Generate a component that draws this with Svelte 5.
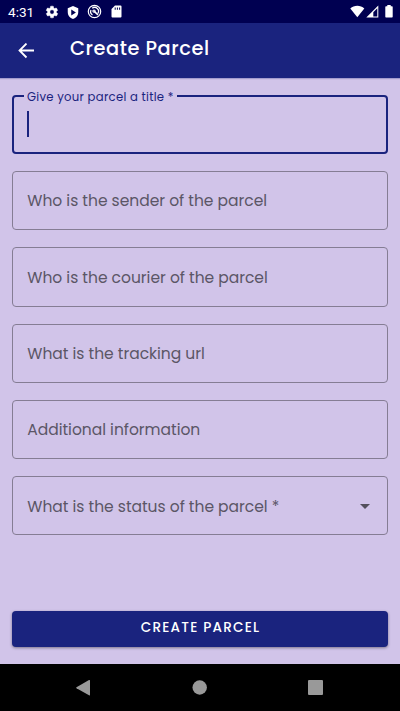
<script>
  const fields = [
    { label: 'Who is the sender of the parcel' },
    { label: 'Who is the courier of the parcel' },
    { label: 'What is the tracking url' },
    { label: 'Additional information' },
    { label: 'What is the status of the parcel *', select: true }
  ];
</script>

<div class="screen">
  <div class="status">
    <span class="time">4:31</span>
    <svg class="gear" width="14" height="14" viewBox="0 0 24 24"><path fill="#fff" stroke="#fff" stroke-width=".8" d="M19.4 13c0-.3.1-.6.1-1s0-.7-.1-1l2.1-1.6c.2-.2.2-.4.1-.6l-2-3.5c-.1-.2-.4-.3-.6-.2l-2.500 1c-.5-.4-1.100-.7-1.700-1l-.4-2.600c0-.3-.2-.5-.5-.5h-4c-.2 0-.4.2-.5.500l-.4 2.600c-.6.300-1.200.600-1.700 1l-2.500-1c-.2-.1-.5 0-.6.200l-2 3.500c-.1.200-.1.400.1.600L4.500 11c0 .300-.1.700-.1 1s0 .7.1 1l-2.100 1.600c-.2.200-.2.400-.1.600l2 3.500c.1.200.4.300.6.200l2.500-1c.5.400 1.100.7 1.700 1l.4 2.600c0 .3.2.5.5.5h4c.2 0 .4-.2.5-.5l.4-2.600c.6-.3 1.200-.6 1.700-1l2.500 1c.2.100.5 0 .6-.200l2-3.500c.1-.200.1-.400-.1-.600L19.400 13zM12 15.700A3.700 3.700 0 1 1 12 8.300a3.700 3.700 0 0 1 0 7.400z"/></svg>
    <svg class="shield" width="14" height="15" viewBox="0 0 24 24"><path fill="#fff" fill-rule="evenodd" d="M12 1 3 4.500V11c0 5.700 3.800 10.700 9 12 5.200-1.300 9-6.300 9-12V4.500zM9 7l8 5-8 5z"/></svg>
    <svg class="round" width="15" height="15" viewBox="0 0 15 15" fill="none" stroke="#fff"><circle cx="7.500" cy="7.500" r="6.200" stroke-width="1.200"/><path stroke-width="1.300" d="M5.500 10.900A3.900 3.900 0 0 1 4 6M5.200 4.200a3.900 3.900 0 0 1 5.600 5.300"/><path stroke-width="1.500" d="M7.300 7.400l3.700 3.500"/><circle cx="7" cy="7.100" r="1.100" stroke-width="1.200"/></svg>
    <svg class="card" width="11" height="13" viewBox="0 0 11 13"><path fill="#fff" fill-rule="evenodd" d="M4 .5h5.500q1 0 1 1v10q0 1-1 1h-8q-1 0-1-1V4zM3.700 2.500v2.300h1V2.500zm2.200 0v2.300h1V2.500zm2.200 0v2.300h1V2.500z"/></svg>
    <span class="grow"></span>
    <svg class="wifi" width="15" height="13" viewBox="0 0 15 13"><path fill="#fff" d="M7.300 12.200.300 3.500C4-.300 10.600-.300 14.300 3.500z"/></svg>
    <svg class="signal" width="13" height="13" viewBox="0 0 13 13"><path fill="#fff" fill-rule="evenodd" d="M.3 12.500 12.300.5v12zM7.300 7.200v4.300h4V3.200z"/></svg>
    <svg class="battery" width="8" height="13" viewBox="0 0 8 13"><path fill="#fff" d="M2.300 0h3.400v1.300H7q.7 0 .7.700v9.800q0 .7-.7.700H1q-.7 0-.7-.7V2q0-.7.700-.7h1.300z"/></svg>
  </div>

  <header>
    <svg width="17" height="16" viewBox="0 0 17 16" fill="none" stroke="#fff" stroke-width="1.800"><path d="M16 7.500H2M8.500.5l-7 7 7 7"/></svg>
    <h1>Create Parcel</h1>
  </header>

  <main>
    <fieldset class="active">
      <legend>Give your parcel a title *</legend>
      <div class="caret"></div>
    </fieldset>
    {#each fields as field}
      <div class="field">
        <span>{field.label}</span>
        {#if field.select}
          <svg width="10" height="5" viewBox="0 0 10 5"><path fill="#534f5c" d="M0 0h10L5 5z"/></svg>
        {/if}
      </div>
    {/each}
    <button>CREATE PARCEL</button>
  </main>

  <nav>
    <svg width="15" height="16" viewBox="0 0 15 16"><path fill="#999" d="M.5 7.300 13 .1q1-.4 1 .6v14.100q0 1-1 .5L.5 8.300q-.7-.5 0-1z"/></svg>
    <svg width="15" height="15" viewBox="0 0 15 15"><circle cx="7.700" cy="7.500" r="7.200" fill="#999"/></svg>
    <svg width="15" height="15" viewBox="0 0 15 15"><rect width="15" height="15" rx="1" fill="#999"/></svg>
  </nav>
</div>

<style>
  :global(body) { background: #d1c4e9; }
  .screen {
    width: 400px;
    height: 711px;
    display: flex;
    flex-direction: column;
    overflow: hidden;
    background: #d1c4e9;
    font-family: Poppins, Inter, sans-serif;
  }
  svg { display: block; flex: none; }
  .status {
    height: 23px;
    flex: none;
    box-sizing: border-box;
    display: flex;
    align-items: center;
    padding: 1px 7px 0 8px;
    background: #000051;
    color: #fff;
  }
  .time { width: 37px; font: 13.600px/16px Roboto, sans-serif; }
  .shield { margin-left: 7px; }
  .round { margin-left: 7px; }
  .card { margin-left: 9px; }
  .gear, .round, .card { margin-top: -1px; }
  .grow { flex: 1; }
  .signal, .wifi, .battery { margin-top: -1px; }
  .signal { margin-left: 1px; }
  .battery { margin-left: 6px; }
  header {
    height: 55px;
    flex: none;
    box-sizing: border-box;
    display: flex;
    align-items: center;
    padding-left: 18px;
    background: #1a237e;
    box-shadow: 0 1px 1px #1a237e40;
    color: #fff;
  }
  h1 {
    margin: -4px 0 0 35px;
    font-size: 19.400px;
    line-height: 28px;
    font-weight: 500;
    letter-spacing: 0.540px;
  }
  main {
    height: 586px;
    flex: none;
    box-sizing: border-box;
    display: flex;
    flex-direction: column;
    padding: 12px 12px 17px;
  }
  .active {
    height: 64px;
    flex: none;
    box-sizing: border-box;
    margin: 0;
    padding: 0 13px;
    border: 2px solid #1a237e;
    border-radius: 4px;
    color: #1a237e;
  }
  legend {
    height: 12px;
    margin-left: -3px;
    padding: 0 3px;
    font-size: 11.650px;
    line-height: 14px;
    letter-spacing: 0.290px;
  }
  .caret { width: 2px; height: 26px; margin-top: 9px; background: #1a237e; }
  .field {
    height: 59.300px;
    flex: none;
    box-sizing: border-box;
    margin-top: 17px;
    display: flex;
    align-items: center;
    justify-content: space-between;
    padding: 0.500px 17px 0 14.300px;
    border: 1px solid #857d94;
    border-radius: 4px;
    color: #5b5666;
    font-size: 15.520px;
    letter-spacing: -0.020px;
    white-space: nowrap;
  }
  button {
    height: 36px;
    margin: auto 0 0;
    padding: 0 0 2px 1px;
    border: 0;
    border-radius: 4px;
    background: #1a237e;
    box-shadow: 0 1px 3px #0006;
    color: #fff;
    font: 500 13.600px/20px Poppins, Inter, sans-serif;
    letter-spacing: 1.200px;
  }
  nav {
    flex: 1;
    display: flex;
    align-items: center;
    justify-content: space-between;
    padding: 0 77.500px 0 76px;
    background: #000;
  }
</style>
